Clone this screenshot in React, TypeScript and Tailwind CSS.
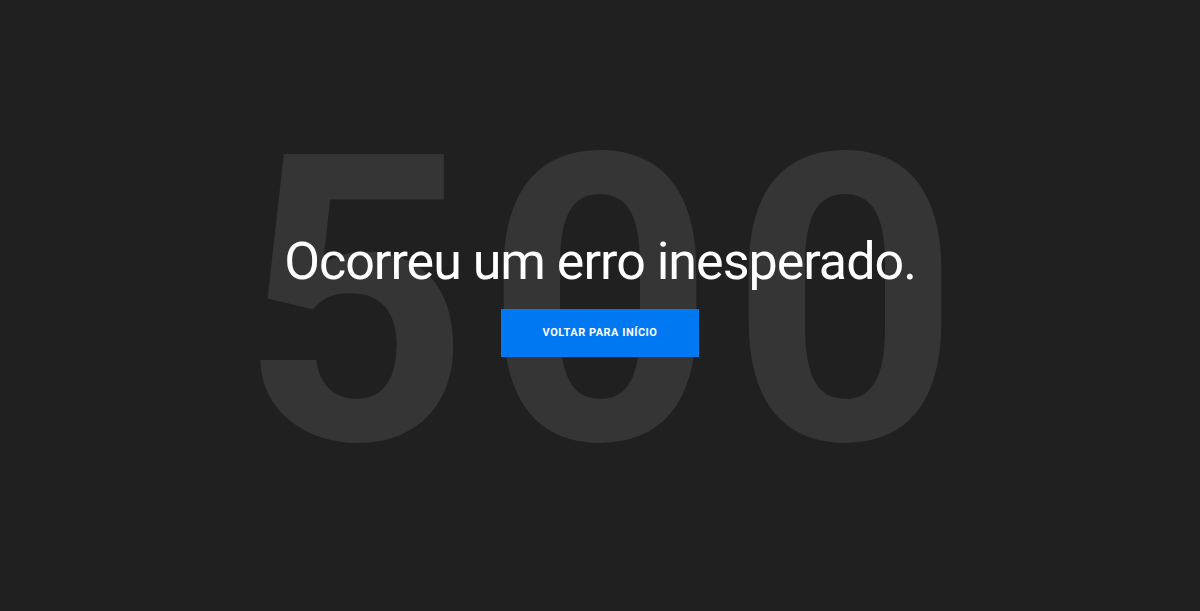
import React from "react";

export default function App() {
  return (
    <div className="h-[611px] w-full bg-[#202020] grid place-items-center overflow-hidden font-['Roboto',_'Liberation_Sans',_sans-serif]">
      <div className="grid place-items-center [grid-area:1/1] w-full">
        <div className="[grid-area:1/1] text-[401px] leading-none font-bold text-[#353535] tracking-[15px] pl-[15px] select-none translate-y-[-3px]">
          500
        </div>
        <div className="[grid-area:1/1] flex flex-col items-center translate-y-[-11px]">
          <h1 className="text-[52px] leading-[60px] font-normal text-white tracking-[-1px]">
            Ocorreu um erro inesperado.
          </h1>
          <button className="mt-[17px] w-[198px] h-[48px] bg-[#0078f2] text-white text-[11px] font-bold tracking-[0.5px] uppercase">
            VOLTAR PARA INÍCIO
          </button>
        </div>
      </div>
    </div>
  );
}
